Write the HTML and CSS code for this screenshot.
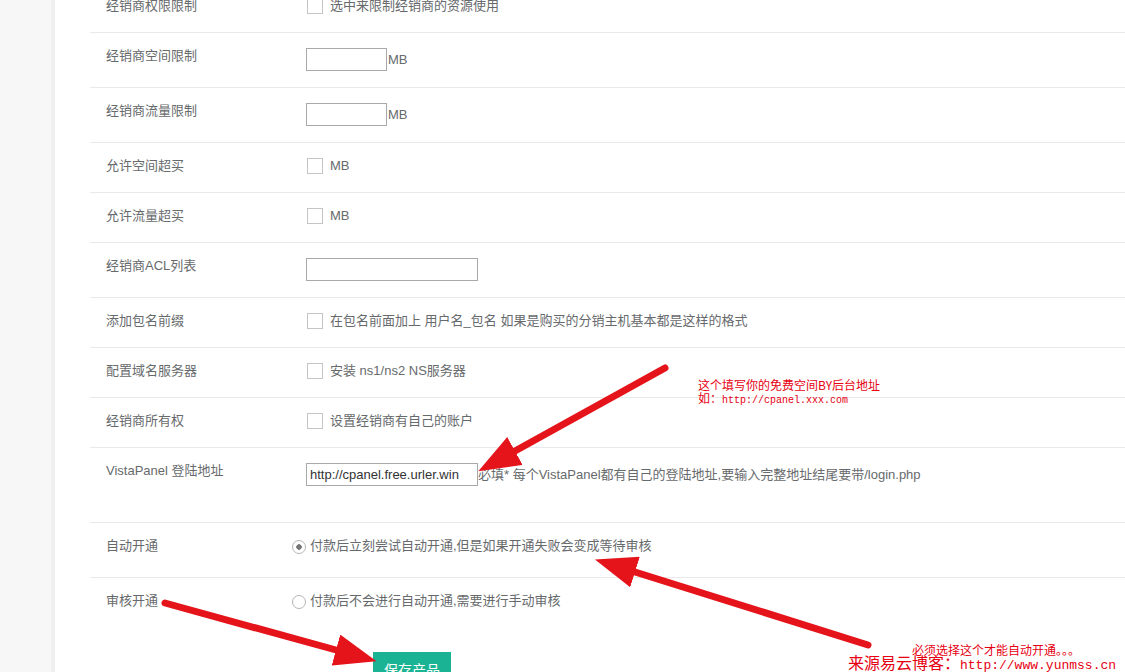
FILE: index.html
```html
<!DOCTYPE html>
<html lang="zh-CN">
<head>
    <meta charset="UTF-8">
    <meta name="viewport" content="width=device-width, initial-scale=1.0">
    <title>产品设置 - 经销商</title>
    <link rel="stylesheet" href="styles.css">
</head>
<body>
    <div class="page">
        <aside class="sidebar"></aside>

        <main class="main">
            <form class="form">
                <div class="row">
                    <div class="label">经销商权限限制</div>
                    <label class="control"><input type="checkbox" class="check"> 选中来限制经销商的资源使用</label>
                </div>
                <div class="row row--input">
                    <div class="label">经销商空间限制</div>
                    <div class="control control--input"><input type="text" class="text text--small"><span class="unit">MB</span></div>
                </div>
                <div class="row row--input">
                    <div class="label">经销商流量限制</div>
                    <div class="control control--input"><input type="text" class="text text--small"><span class="unit">MB</span></div>
                </div>
                <div class="row">
                    <div class="label">允许空间超买</div>
                    <label class="control"><input type="checkbox" class="check"> MB</label>
                </div>
                <div class="row">
                    <div class="label">允许流量超买</div>
                    <label class="control"><input type="checkbox" class="check"> MB</label>
                </div>
                <div class="row row--input">
                    <div class="label">经销商ACL列表</div>
                    <div class="control control--input"><input type="text" class="text"></div>
                </div>
                <div class="row">
                    <div class="label">添加包名前缀</div>
                    <label class="control"><input type="checkbox" class="check"> 在包名前面加上 用户名_包名 如果是购买的分销主机基本都是这样的格式</label>
                </div>
                <div class="row">
                    <div class="label">配置域名服务器</div>
                    <label class="control"><input type="checkbox" class="check"> 安装 ns1/ns2 NS服务器</label>
                </div>
                <div class="row">
                    <div class="label">经销商所有权</div>
                    <label class="control"><input type="checkbox" class="check"> 设置经销商有自己的账户</label>
                </div>
                <div class="row row--tall">
                    <div class="label">VistaPanel 登陆地址</div>
                    <div class="control control--input"><input type="text" class="text" value="http://cpanel.free.urler.win"><span class="help">必填* 每个VistaPanel都有自己的登陆地址,要输入完整地址结尾要带/login.php</span></div>
                </div>
                <div class="row row--input row--radio">
                    <div class="label">自动开通</div>
                    <label class="control"><input type="radio" name="open" class="radio" checked> 付款后立刻尝试自动开通,但是如果开通失败会变成等待审核</label>
                </div>
                <div class="row row--input row--radio row--last">
                    <div class="label">审核开通</div>
                    <label class="control"><input type="radio" name="open" class="radio"> 付款后不会进行自动开通,需要进行手动审核</label>
                </div>
                <div class="actions">
                    <button type="button" class="btn-save">保存产品</button>
                </div>
            </form>
        </main>

        <!-- annotations drawn over the screenshot -->
        <svg class="arrows" width="1125" height="672" viewBox="0 0 1125 672">
            <defs>
                <marker id="head" markerUnits="userSpaceOnUse" markerWidth="42" markerHeight="32" refX="0" refY="16" orient="auto">
                    <path d="M0,0 L42,16 L0,32 z" fill="#e5141b"/>
                </marker>
            </defs>
            <line x1="665" y1="368" x2="515" y2="451" stroke="#e5141b" stroke-width="7" stroke-linecap="round" marker-end="url(#head)"/>
            <line x1="868" y1="645" x2="635" y2="572" stroke="#e5141b" stroke-width="7" stroke-linecap="round" marker-end="url(#head)"/>
            <line x1="165" y1="603" x2="336" y2="650" stroke="#e5141b" stroke-width="7" stroke-linecap="round" marker-end="url(#head)"/>
        </svg>

        <div class="note note--url">这个填写你的免费空间BY后台地址<br>如：<span class="mono">http://cpanel.xxx.com</span></div>
        <div class="note note--auto">必须选择这个才能自动开通。。。</div>
        <div class="note note--source">来源易云博客：<span class="mono">http://www.yunmss.cn</span></div>
    </div>
</body>
</html>
```

FILE: styles.css
```css
* {
    margin: 0;
    padding: 0;
    box-sizing: border-box;
}

body {
    font-family: "Liberation Sans", "Noto Sans CJK SC", sans-serif;
    font-size: 13px;
    color: #676a6c;
    background: white;
    overflow: hidden;
}

.page {
    position: relative;
    display: flex;
    width: 1125px;
    height: 672px;
    overflow: hidden;
}

.sidebar {
    width: 55px;
    flex-shrink: 0;
    background: #f7f7f7;
    border-right: 4px solid #f0f0f0;
}

.main {
    flex: 1;
    padding-left: 35px;
}

.form {
    margin-top: -17px;
}

.row {
    display: flex;
    height: 50px;
    padding: 13px 0 0 16px;
    border-bottom: 1px solid #e7eaec;
    line-height: 20px;
}

.row--input {
    height: 55px;
}

.row--tall {
    height: 75px;
}

.row--last {
    border-bottom: none;
}

.label {
    width: 200px;
    flex-shrink: 0;
}

.row--radio .label {
    width: 186px;
}

.control {
    display: flex;
    align-items: center;
    height: 20px;
}

.control--input {
    height: 23px;
    margin-top: 2px;
}

.check {
    appearance: none;
    width: 16px;
    height: 16px;
    margin: 0 7px 0 1px;
    border: 1px solid #c4c4c4;
    background: white;
}

.radio {
    appearance: none;
    width: 14px;
    height: 14px;
    margin: 1px 4px 0 0;
    border: 1px solid #b5b5b5;
    border-radius: 50%;
    background: white;
}

.radio:checked {
    background: radial-gradient(circle, #777 0, #777 2.5px, white 3px);
}

.text {
    width: 172px;
    height: 23px;
    padding: 0 3px;
    border: 1px solid #a9a9a9;
    font-family: "Liberation Sans", "Noto Sans CJK SC", sans-serif;
    font-size: 13px;
    color: #333;
    outline: none;
}

.text--small {
    width: 81px;
}

.unit {
    font-size: 13px;
    padding-left: 1px;
}

.help {
    white-space: nowrap;
}

.actions {
    padding: 19px 0 0 283px;
}

.btn-save {
    padding: 7px 11px;
    background: #1ab394;
    border: none;
    color: white;
    font-family: "Noto Sans CJK SC", sans-serif;
    font-size: 14px;
    line-height: 20px;
}

.arrows {
    position: absolute;
    left: 0;
    top: 0;
    pointer-events: none;
}

.note {
    position: absolute;
    color: #e60012;
    font-family: "Noto Sans CJK SC", sans-serif;
    font-size: 12px;
    line-height: 13px;
    white-space: nowrap;
}

.note .mono {
    font-family: "Liberation Mono", monospace;
    font-size: 10px;
}

.note--url {
    left: 698px;
    top: 378px;
}

.note--auto {
    left: 912px;
    top: 643px;
    line-height: 14px;
}

.note--source {
    left: 848px;
    top: 653px;
    font-size: 16px;
    line-height: 18px;
}

.note--source .mono {
    font-size: 13px;
}
```
